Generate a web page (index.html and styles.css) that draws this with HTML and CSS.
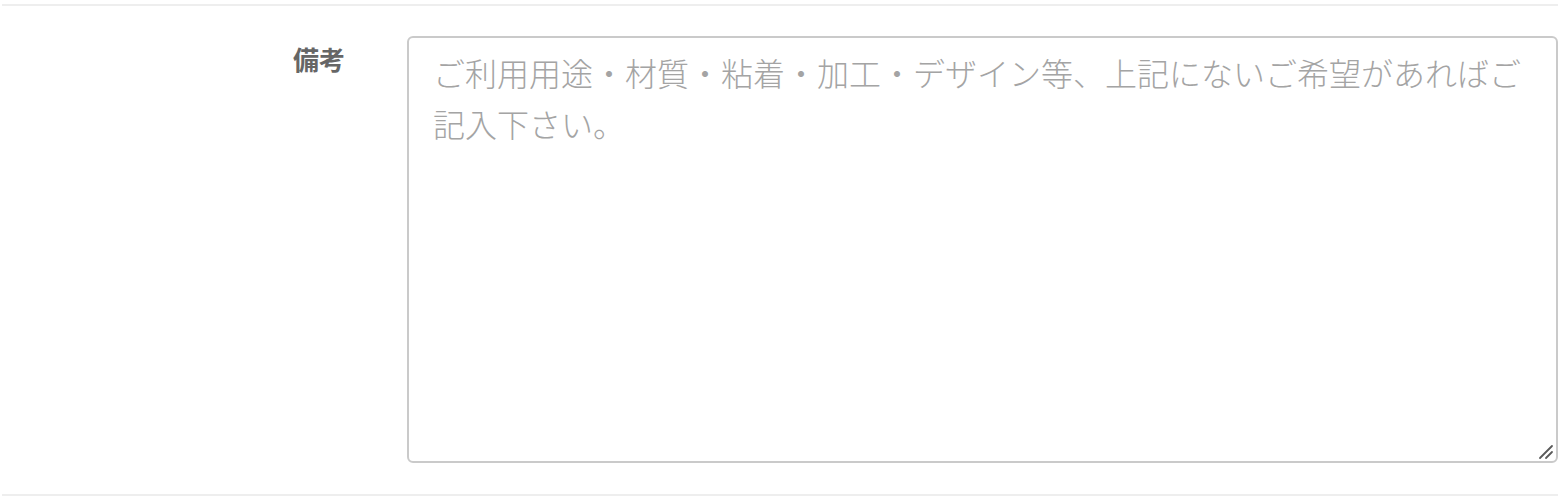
FILE: index.html
```html
<!DOCTYPE html>
<html lang="ja">
<head>
<meta charset="utf-8">
<title>お問い合わせ</title>
<link rel="stylesheet" href="styles.css">
</head>
<body>
  <div class="form">
    <div class="form-row">
      <label class="form-label" for="note">備考</label>
      <div class="form-field">
        <textarea id="note" class="form-textarea" placeholder="ご利用用途・材質・粘着・加工・デザイン等、上記にないご希望があればご記入下さい。"></textarea>
        <svg class="form-grip" width="16" height="16" viewBox="0 0 16 16" aria-hidden="true">
          <line x1="2" y1="14" x2="14" y2="2" />
          <line x1="8" y1="14" x2="14" y2="8" />
        </svg>
      </div>
    </div>
    <div class="form-row form-row--end"></div>
  </div>
</body>
</html>
```

FILE: styles.css
```css
html, body {
  margin: 0;
  padding: 0;
  background: #fff;
}

body {
  font-family: "Noto Sans CJK JP", "Noto Sans", sans-serif;
  color: #666;
}

.form {
  padding: 4px 6px 0 2px;
}

.form-row {
  display: grid;
  grid-template-columns: 343px 1fr;
  column-gap: 62px;
  align-items: start;
  border-top: 2px solid #eeeeee;
  padding: 30px 0 31px;
}

.form-row--end {
  padding: 0;
  height: 6px;
}

.form-label {
  text-align: right;
  font-size: 26px;
  font-weight: 700;
  line-height: 1.5;
  color: #666;
  padding-top: 3px;
}

.form-field {
  position: relative;
  display: flex;
}

.form-textarea {
  box-sizing: border-box;
  width: 100%;
  height: 427px;
  margin: 0;
  padding: 9px 24px;
  border: 2px solid #cacaca;
  border-radius: 6px;
  font-family: "Noto Sans CJK JP", "Noto Sans", sans-serif;
  font-size: 32px;
  font-weight: 300;
  line-height: 1.58;
  color: #333;
  background: #fff;
  outline: none;
  resize: none;
}

.form-textarea::placeholder {
  color: #a4a4a4;
  opacity: 1;
}

/* resize grip in the lower-right corner */
.form-grip {
  position: absolute;
  right: 4px;
  bottom: 3px;
  stroke: #5a5a5a;
  stroke-width: 1.8;
  stroke-linecap: round;
  pointer-events: none;
}
```
